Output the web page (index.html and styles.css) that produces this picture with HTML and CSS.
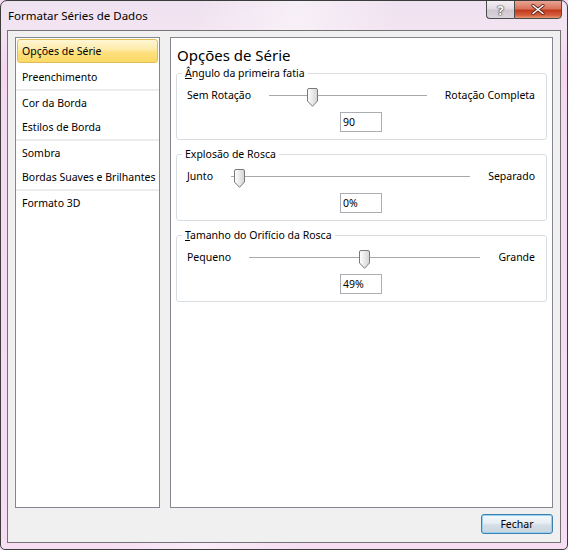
FILE: index.html
```html
<!DOCTYPE html>
<html lang="pt-BR">
<head>
<meta charset="utf-8">
<title>Formatar Séries de Dados</title>
<link rel="stylesheet" href="styles.css">
</head>
<body>
<div class="window">
  <div class="titlebar">
    <div class="title">Formatar Séries de Dados</div>
    <div class="controls">
      <div class="ctl help">?</div>
      <div class="ctl close">
        <svg width="14" height="11" viewBox="0 0 14 11"><path d="M2 1.5 L12 9.5 M12 1.5 L2 9.5" stroke="#5a2418" stroke-width="3.2" stroke-linecap="round"/><path d="M2 1.5 L12 9.5 M12 1.5 L2 9.5" stroke="#ffffff" stroke-width="1.6" stroke-linecap="round"/></svg>
      </div>
    </div>
  </div>
  <div class="client">
    <div class="main">
      <div class="list">
        <div class="grp">
          <div class="item selected">Opções de Série</div>
          <div class="item">Preenchimento</div>
        </div>
        <div class="grp sep">
          <div class="item">Cor da Borda</div>
          <div class="item">Estilos de Borda</div>
        </div>
        <div class="grp sep">
          <div class="item">Sombra</div>
          <div class="item">Bordas Suaves e Brilhantes</div>
        </div>
        <div class="grp sep">
          <div class="item">Formato 3D</div>
        </div>
      </div>
      <div class="panel">
        <h1 class="heading">Opções de Série</h1>
        <fieldset class="group">
          <legend><u>Â</u>ngulo da primeira fatia</legend>
          <div class="row">
            <span class="lbl">Sem Rotação</span>
            <div class="slider">
              <div class="track"></div>
              <svg class="thumb" style="left:38px" width="11" height="19" viewBox="0 0 11 19"><defs><linearGradient id="tg1" x1="0" y1="0" x2="1" y2="0"><stop offset="0" stop-color="#ffffff"/><stop offset="1" stop-color="#d4d4d4"/></linearGradient></defs><path d="M0.5 2 Q0.5 0.5 2 0.5 H9 Q10.5 0.5 10.5 2 V13 L5.5 18.3 L0.5 13 Z" fill="url(#tg1)" stroke="#7a7a7a"/></svg>
            </div>
            <span class="lbl">Rotação Completa</span>
          </div>
          <div class="valrow"><div class="val">90</div></div>
        </fieldset>
        <fieldset class="group">
          <legend>Explosão de Rosca</legend>
          <div class="row">
            <span class="lbl">Junto</span>
            <div class="slider">
              <div class="track"></div>
              <svg class="thumb" style="left:3px" width="11" height="19" viewBox="0 0 11 19"><defs><linearGradient id="tg2" x1="0" y1="0" x2="1" y2="0"><stop offset="0" stop-color="#ffffff"/><stop offset="1" stop-color="#d4d4d4"/></linearGradient></defs><path d="M0.5 2 Q0.5 0.5 2 0.5 H9 Q10.5 0.5 10.5 2 V13 L5.5 18.3 L0.5 13 Z" fill="url(#tg2)" stroke="#7a7a7a"/></svg>
            </div>
            <span class="lbl">Separado</span>
          </div>
          <div class="valrow"><div class="val">0%</div></div>
        </fieldset>
        <fieldset class="group">
          <legend><u>T</u>amanho do Orifício da Rosca</legend>
          <div class="row">
            <span class="lbl">Pequeno</span>
            <div class="slider">
              <div class="track"></div>
              <svg class="thumb" style="left:110px" width="11" height="19" viewBox="0 0 11 19"><defs><linearGradient id="tg3" x1="0" y1="0" x2="1" y2="0"><stop offset="0" stop-color="#ffffff"/><stop offset="1" stop-color="#d4d4d4"/></linearGradient></defs><path d="M0.5 2 Q0.5 0.5 2 0.5 H9 Q10.5 0.5 10.5 2 V13 L5.5 18.3 L0.5 13 Z" fill="url(#tg3)" stroke="#7a7a7a"/></svg>
            </div>
            <span class="lbl">Grande</span>
          </div>
          <div class="valrow"><div class="val">49%</div></div>
        </fieldset>
      </div>
    </div>
    <div class="footer">
      <button class="btn">Fechar</button>
    </div>
  </div>
</div>
</body>
</html>
```

FILE: styles.css
```css
* { box-sizing: border-box; }
html, body {
  margin: 0;
  padding: 0;
  width: 568px;
  height: 550px;
  background: #f4dcf0;
  overflow: hidden;
}
body {
  font-family: "Noto Sans", "DejaVu Sans", sans-serif;
  font-size: 10.5px;
  color: #000;
}
.window {
  width: 568px;
  height: 550px;
  border: 1px solid #3c3c3c;
  border-radius: 7px 7px 5px 5px;
  background:
    linear-gradient(100deg, rgba(255,255,255,0) 30%, rgba(255,255,255,0.45) 45%, rgba(255,255,255,0) 60%),
    linear-gradient(180deg, #efe2f0 0px, #f3e4f2 29px, #f5d8f0 60px, #f6ddf2 100%);
  display: flex;
  flex-direction: column;
  overflow: hidden;
}
.titlebar {
  height: 29px;
  display: flex;
  align-items: flex-start;
}
.title {
  padding-left: 7px;
  line-height: 29px;
  font-size: 11.5px;
  color: #000;
}
.controls {
  margin-left: auto;
  margin-right: 5px;
  margin-top: -1px;
  display: flex;
}
.ctl {
  height: 19px;
  border: 1px solid #4b4b4b;
  display: flex;
  align-items: center;
  justify-content: center;
}
.help {
  width: 28px;
  border-right: none;
  border-radius: 0 0 0 4px;
  background: linear-gradient(180deg, #f4eef4 0%, #e3dbe3 45%, #cfc6cf 55%, #dcd4dc 100%);
  font-size: 13px;
  font-weight: bold;
  color: #fff;
  text-shadow: 0 0 1px #333, 0 0 1px #333, 0 0 2px #555;
}
.close {
  width: 48px;
  border-radius: 0 0 4px 0;
  background: linear-gradient(180deg, #e8a593 0%, #d9745d 45%, #c2391c 55%, #d4603f 85%, #e89a73 100%);
}
.client {
  flex: 1;
  margin: 0 6px 6px 6px;
  border: 1px solid #737373;
  background: #f0f0f0;
  padding: 6px 7px 8px 7px;
  display: flex;
  flex-direction: column;
}
.main {
  flex: 1;
  display: flex;
  gap: 10px;
}
.list {
  width: 145px;
  border: 1px solid #828790;
  background: #fff;
  padding-top: 1px;
}
.grp.sep {
  border-top: 2px solid #ededed;
}
.item {
  height: 24px;
  line-height: 24px;
  padding-left: 6px;
  white-space: nowrap;
}
.item.selected {
  margin: 0 1px 2px 1px;
  padding-left: 4px;
  border: 1px solid #e0bc55;
  border-radius: 3px;
  line-height: 22px;
  background: linear-gradient(180deg, #fff7d6 0%, #feeaa6 45%, #fde07f 55%, #fcd967 100%);
}
.panel {
  flex: 1;
  border: 1px solid #828790;
  background: #fff;
  padding: 7px 5px 0 5px;
}
.heading {
  margin: 0;
  font-weight: normal;
  font-size: 15px;
  line-height: 20px;
  padding-left: 1px;
}
.group {
  margin: 0 0 6px 0;
  padding: 4px 11px 7px 10px;
  border: 1px solid #d8dde2;
  border-radius: 3px;
  min-width: 0;
}
.group legend {
  margin-left: -5px;
  padding: 0 3px;
  line-height: 16px;
  font-size: 10.5px;
}
.row {
  height: 20px;
  display: flex;
  align-items: center;
  gap: 18px;
}
.lbl {
  white-space: nowrap;
}
.slider {
  flex: 1;
  height: 20px;
  position: relative;
}
.track {
  position: absolute;
  left: 0;
  right: 0;
  top: 10px;
  height: 1px;
  background: #a9a9a9;
}
.thumb {
  position: absolute;
  top: 3px;
  display: block;
}
.valrow {
  margin-top: 7px;
  display: flex;
  justify-content: center;
}
.val {
  width: 42px;
  height: 20px;
  border: 1px solid #abadb3;
  background: #fff;
  padding-left: 2px;
  line-height: 18px;
}
.footer {
  margin-top: 6px;
  display: flex;
  justify-content: flex-end;
}
.btn {
  width: 72px;
  height: 20px;
  border: 1px solid #3c7fb1;
  border-radius: 3px;
  background: linear-gradient(180deg, #f4f9fc 0%, #e8eef3 45%, #d6dfe7 55%, #c9d4de 100%);
  box-shadow: inset 0 0 0 1px #98d1ef;
  font-family: "Noto Sans", "DejaVu Sans", sans-serif;
  font-size: 10.5px;
  color: #000;
  padding: 0;
}
```
